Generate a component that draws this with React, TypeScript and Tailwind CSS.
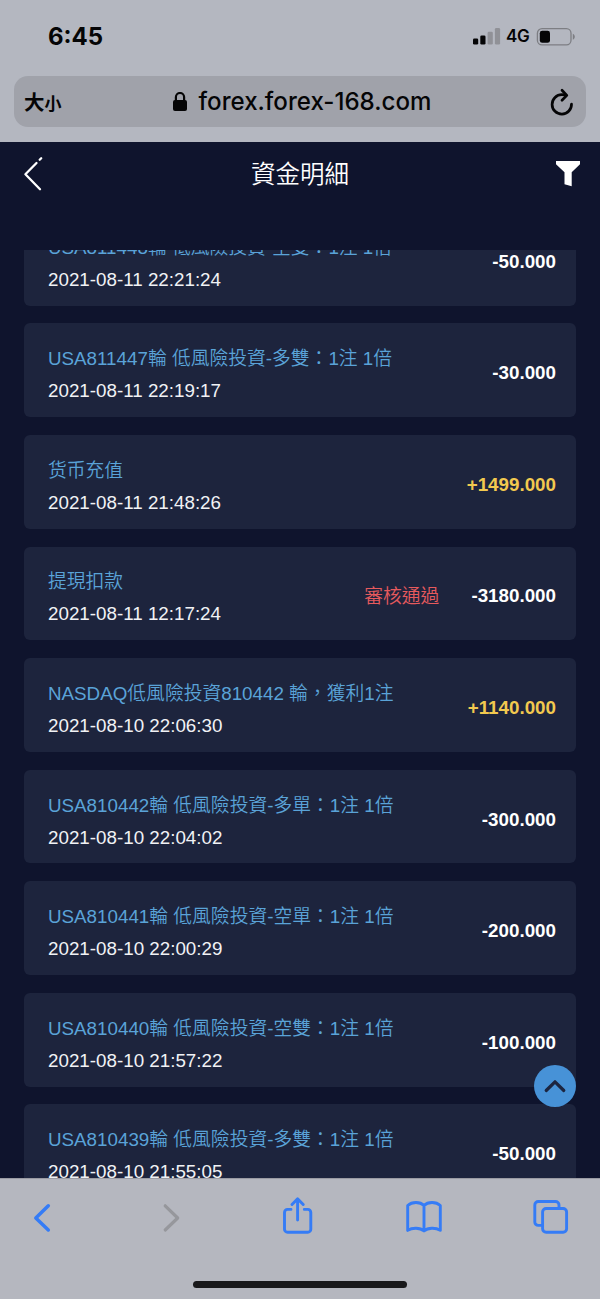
import React from 'react';
import clsx from 'clsx';

interface FundRecord {
  id: number;
  title: string;
  time: string;
  amount: string;
  status?: string;
}

const records: FundRecord[] = [
  { id: 1, title: 'USA811448輪 低風險投資-空雙：1注 1倍', time: '2021-08-11 22:21:24', amount: '-50.000' },
  { id: 2, title: 'USA811447輪 低風險投資-多雙：1注 1倍', time: '2021-08-11 22:19:17', amount: '-30.000' },
  { id: 3, title: '货币充值', time: '2021-08-11 21:48:26', amount: '+1499.000' },
  { id: 4, title: '提現扣款', time: '2021-08-11 12:17:24', amount: '-3180.000', status: '審核通過' },
  { id: 5, title: 'NASDAQ低風險投資810442 輪，獲利1注', time: '2021-08-10 22:06:30', amount: '+1140.000' },
  { id: 6, title: 'USA810442輪 低風險投資-多單：1注 1倍', time: '2021-08-10 22:04:02', amount: '-300.000' },
  { id: 7, title: 'USA810441輪 低風險投資-空單：1注 1倍', time: '2021-08-10 22:00:29', amount: '-200.000' },
  { id: 8, title: 'USA810440輪 低風險投資-空雙：1注 1倍', time: '2021-08-10 21:57:22', amount: '-100.000' },
  { id: 9, title: 'USA810439輪 低風險投資-多雙：1注 1倍', time: '2021-08-10 21:55:05', amount: '-50.000' },
];

function StatusBar() {
  return (
    <div className="flex h-[76px] items-center justify-between pb-[3px] pl-12 pr-6 font-['Inter','Liberation_Sans',sans-serif] text-[#050506]">
      <span className="text-[24px] font-bold leading-none">6:45</span>
      <div className="flex items-center">
        <svg className="h-[18px] w-7" viewBox="0 0 28 18">
          <rect x="0" y="10.5" width="5.2" height="6" rx="1.3" fill="#050506" />
          <rect x="7.3" y="7.5" width="5.2" height="9" rx="1.3" fill="#050506" />
          <rect x="14.6" y="3.7" width="5.2" height="12.8" rx="1.3" fill="#909197" />
          <rect x="21.9" y="0" width="5.2" height="16.5" rx="1.3" fill="#909197" />
        </svg>
        <span className="ml-[5px] w-6 text-[17px] font-semibold leading-none tracking-tight">4G</span>
        <svg className="ml-[6px] h-[18px] w-10" viewBox="0 0 40 18">
          <rect x="1.4" y="0.7" width="33.6" height="16.2" rx="4.6" fill="none" stroke="#7d7e83" strokeWidth="1.3" />
          <rect x="3.8" y="2.8" width="10.2" height="12" rx="2.4" fill="#050506" />
          <path d="M36.8 5.8v6c1.2-.5 2-1.6 2-3s-.8-2.5-2-3z" fill="#7d7e83" />
        </svg>
      </div>
    </div>
  );
}

function AddressBar() {
  return (
    <div className="mx-[14px] flex h-[51px] items-center justify-between rounded-[14px] bg-[#a0a2aa] pl-[10px] pr-3 text-[#050506]">
      <div className="flex w-[60px] items-baseline font-['Noto_Sans_CJK_TC',sans-serif] font-bold leading-none">
        <span className="text-[20.5px]">大</span>
        <span className="text-[17px]">小</span>
      </div>
      <div className="flex items-center pl-[6px]">
        <svg className="h-5 w-[14px]" viewBox="0 0 14 20">
          <rect x="0" y="8" width="14" height="11" rx="2" fill="#050506" />
          <path d="M2.9 9V5.1a4.1 4.1 0 0 1 8.2 0V9" fill="none" stroke="#050506" strokeWidth="2.2" />
        </svg>
        <span className="ml-3 pt-[2px] font-['Inter','Liberation_Sans',sans-serif] text-[24.1px] font-medium leading-none">
          forex.forex-168.com
        </span>
      </div>
      <div className="flex w-[60px] justify-end">
        <svg className="h-7 w-6" viewBox="0 0 24 28" fill="none" stroke="#050506" strokeWidth="2.7" strokeLinecap="round" strokeLinejoin="round">
          <path d="M16 7.3C14.900 6.900 13.700 6.700 12 6.700A9.700 9.700 0 1 0 21.500 16" />
          <path d="M12 2.3l4.800 5.100-4.800 4.900" />
        </svg>
      </div>
    </div>
  );
}

function PageHeader() {
  return (
    <header className="flex h-[108px] shrink-0 items-start justify-between px-5 text-white">
      <svg className="mt-[14px] h-9 w-8" viewBox="0 0 32 36" fill="none" stroke="#fff" strokeWidth="2.3" strokeLinecap="round" strokeLinejoin="round">
        <path d="M16.5 7L5.4 18.3 20 33.2" />
        <path d="M19.7 3.8l1.5-1.5" />
      </svg>
      <h1 className="mt-[17px] text-[24.5px] font-[350] leading-8">資金明細</h1>
      <div className="flex w-8 justify-end">
        <svg className="mt-[18px] h-7 w-6" viewBox="0 0 24 28">
          <path d="M0 1h24v3.2l-8.3 8v14l-7.2-2V12.2L0 4.2z" fill="#fff" />
        </svg>
      </div>
    </header>
  );
}

function RecordCard({ record }: { record: FundRecord }) {
  return (
    <li className="flex h-[93.8px] shrink-0 items-center justify-between rounded-[6px] bg-[#1d243d] pl-6 pr-5 text-[18.8px]">
      <div className="flex flex-col gap-1 pt-[10px]">
        <span className="whitespace-nowrap font-[350] leading-7 text-[#5aa3d8]">{record.title}</span>
        <span className="leading-7 text-[#f1f2f5]">{record.time}</span>
      </div>
      <div className="flex items-center gap-8 pt-[6px]">
        {record.status && <span className="pt-[2px] font-[350] leading-7 text-[#e65a5d]">{record.status}</span>}
        <span className={clsx('font-bold leading-7', record.amount.startsWith('+') ? 'text-[#f2c94f]' : 'text-white')}>
          {record.amount}
        </span>
      </div>
    </li>
  );
}

function ToolBar() {
  return (
    <nav className="flex h-[121px] shrink-0 flex-col items-center justify-between border-t border-[#9a9ba3] bg-[#b5b7bf] pb-[11px] pt-[18px]">
      <div className="flex w-full items-center pl-8 text-[#357cf6]">
        <svg className="h-10 w-5" viewBox="0 0 20 40" fill="none" stroke="currentColor" strokeWidth="3.5" strokeLinecap="round" strokeLinejoin="round">
          <path d="M16.3 8.8L3.8 21l12.5 12" />
        </svg>
        <svg className="ml-[109px] h-10 w-5 text-[#96979c]" viewBox="0 0 20 40" fill="none" stroke="currentColor" strokeWidth="3.2" strokeLinecap="round" strokeLinejoin="round">
          <path d="M4.2 8.8L16.7 21 4.2 33" />
        </svg>
        <svg className="ml-[100px] h-10 w-8" viewBox="0 0 32 40" fill="none" stroke="currentColor" strokeWidth="2.9" strokeLinecap="round" strokeLinejoin="round">
          <path d="M10 12.4H6.5a3 3 0 0 0-3 3v16.800a3 3 0 0 0 3 3h20.300a3 3 0 0 0 3-3V15.400a3 3 0 0 0-3-3h-3.500" />
          <path d="M16.6 23V2.500M11 7.500l5.600-5.600L22.200 7.500" />
        </svg>
        <svg className="ml-[93px] h-10 w-9" viewBox="0 0 36 40" fill="none" stroke="currentColor" strokeWidth="2.9" strokeLinejoin="round">
          <path d="M18 34c-4-3.600-11.800-3.600-16.300-.6V8.500C6 4.500 14 4.500 18 8.500c4-4 12-4 16.300 0v24.900c-4.500-3-12.300-3-16.300.6zM18 8.500V34" />
        </svg>
        <svg className="ml-[91px] h-10 w-9" viewBox="0 0 36 40" fill="none" stroke="currentColor" strokeWidth="2.9" strokeLinecap="round" strokeLinejoin="round">
          <path d="M9.600 28.400H5.300a3.500 3.500 0 0 1-3.500-3.500V8A3.500 3.500 0 0 1 5.300 4.500h17.200A3.500 3.500 0 0 1 26 8v3.500" />
          <rect x="9.6" y="11.5" width="24" height="23.7" rx="3.5" />
        </svg>
      </div>
      <div className="h-[7px] w-[214px] rounded-full bg-[#19191b]" />
    </nav>
  );
}

export default function App() {
  return (
    <div className="flex h-[1299px] w-[600px] flex-col overflow-hidden bg-[#0f142d] font-['Liberation_Sans','Noto_Sans_CJK_TC',sans-serif]">
      <div className="h-[142px] shrink-0 bg-[#b4b7c0]">
        <StatusBar />
        <AddressBar />
      </div>
      <PageHeader />

      {/* Scrolled record list */}
      <main className="relative min-h-0 flex-1 overflow-hidden px-6">
        <ul className="-mt-[38.2px] flex flex-col gap-[17.77px]">
          {records.map((record) => (
            <RecordCard key={record.id} record={record} />
          ))}
        </ul>
        <button className="absolute bottom-[71px] right-6 flex h-[42px] w-[42px] items-center justify-center rounded-full bg-[#4792d7]">
          <svg className="h-6 w-6" viewBox="0 0 24 24" fill="none" stroke="#1c2540" strokeWidth="3.2" strokeLinecap="round" strokeLinejoin="round">
            <path d="M3.2 16.5L12 7.800l8.800 8.700" />
          </svg>
        </button>
      </main>

      <ToolBar />
    </div>
  );
}
